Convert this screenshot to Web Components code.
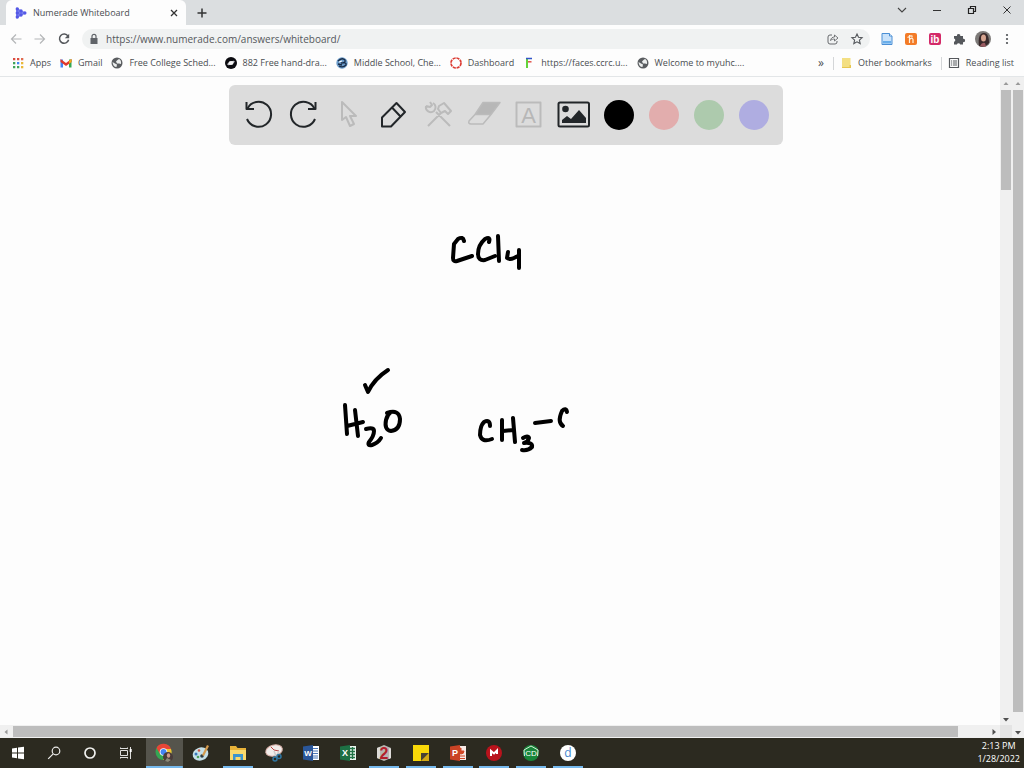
<!DOCTYPE html>
<html lang="en">
<head>
<meta charset="utf-8">
<title>Numerade Whiteboard</title>
<style>
html, body { margin: 0; height: 100%; }
body { font-family: "Open Sans", "Noto Sans", sans-serif; font-size: 9px; line-height: 12px; color: #4a4d51; background: #fdfdfd; overflow: hidden; }
</style>
</head>
<body>
<browser-window></browser-window>
<script>
const icons = {
  numerade: ['0 0 12 12', '<path d="M1 .5 11.5 6 1 11.5z" fill="#7b83ee"/><g fill="#5458e6"><circle cx="2.3" cy="2" r="1.7"/><circle cx="2.3" cy="6" r="1.7"/><circle cx="2.3" cy="10" r="1.7"/><circle cx="6" cy="4" r="1.7"/><circle cx="6" cy="8" r="1.7"/><circle cx="9.8" cy="6" r="1.7"/></g>'],
  x: ['0 0 12 12', '<path d="m3 3 6 6M9 3 3 9" stroke="#333" stroke-width="1.3"/>'],
  plus: ['0 0 12 12', '<path d="M6 1.5v9M1.5 6h9" stroke="#333" stroke-width="1.5"/>'],
  chevron: ['0 0 12 12', '<path d="m2 4 4 4 4-4" fill="none" stroke="#444" stroke-width="1.1"/>'],
  minimize: ['0 0 12 12', '<path d="M2 6.5h8" stroke="#333"/>'],
  restore: ['0 0 12 12', '<path d="M2.5 4.5h5v5h-5zM4.5 4V2.5h5v5H8" fill="none" stroke="#222" stroke-width="1.2"/>'],
  close: ['0 0 12 12', '<path d="m2.5 2.5 7 7m0-7-7 7" stroke="#333"/>'],
  back: ['0 0 12 12', '<path d="M11.5 6H1.5M6 1.5 1.5 6 6 10.5" fill="none" stroke="#b4b6b8" stroke-width="1.2"/>'],
  forward: ['0 0 12 12', '<path d="M.5 6h10M6 1.5 10.5 6 6 10.5" fill="none" stroke="#b4b6b8" stroke-width="1.2"/>'],
  reload: ['0 0 12 12', '<path d="M10 3.2A4.6 4.6 0 1 0 10.6 6.8" fill="none" stroke="#55585c" stroke-width="1.5"/><path d="M11.2.8v4.4H6.8z" fill="#55585c"/>'],
  lock: ['0 0 12 12', '<path d="M2.5 5h7v6h-7z" fill="#5f6368"/><path d="M4 5V3.3a2 2 0 0 1 4 0V5" fill="none" stroke="#5f6368" stroke-width="1.2"/>'],
  share: ['0 0 12 12', '<path d="M5 2H3a2 2 0 0 0-2 2v5a2 2 0 0 0 2 2h5a2 2 0 0 0 2-2V8" fill="none" stroke="#66696c"/><path d="M3.5 7.5C4 5 5.5 4 7.5 4V2L11 5 7.5 8V6C6 6 4.5 6.5 3.5 7.5z" fill="none" stroke="#66696c" stroke-width=".9"/>'],
  star: ['0 0 12 12', '<path d="m6 1 1.5 3.3 3.6.4-2.7 2.4.8 3.5L6 8.8l-3.2 1.8.8-3.5L.9 4.700l3.600-.4z" fill="none" stroke="#55585c" stroke-width="1.1"/>'],
  doc: ['0 0 12 12', '<path d="M1 .5h7.5L11 3v8.5H1z" fill="#c9e2fa" stroke="#4b8fd5"/><path d="M2 8h8v2.500H2z" fill="#69aeea"/><path d="M8.5.5V3H11" fill="#fff" stroke="#4b8fd5"/>'],
  honey: ['0 0 12 12', '<rect width="12" height="12" rx="2" fill="#f37b27"/><path d="M4.5 2v8M4.5 6.5Q7.5 4 8 6.5V10M7 2.5v2M2.5 4.5l4-2" fill="none" stroke="#fff3df" stroke-width="1.2"/>'],
  ib: ['0 0 12 12', '<rect width="12" height="12" rx="2" fill="#d32a68"/><text x="6" y="9.5" text-anchor="middle" font-family="Liberation Sans,sans-serif" font-size="10" font-weight="700" fill="#fff">ib</text>'],
  puzzle: ['0 0 12 12', '<path d="M1 3h3a1.700 1.700 0 1 1 3.300 0H10v2.800a1.700 1.700 0 1 1 0 3.300V11.500H7.200a1.700 1.700 0 0 0-3.300 0H1V8.800a1.700 1.700 0 0 0 0-3.300z" fill="#55585c"/>'],
  avatar: ['0 0 16 16', '<circle cx="8" cy="8" r="8" fill="#7d7a78"/><path d="M4 15C3 8 4 2 9 2c4 0 5 5 5 10a8 8 0 0 1-10 3z" fill="#392a2b"/><ellipse cx="8.5" cy="7" rx="2.5" ry="3.5" fill="#d6a490"/><path d="M5 15q2-4 5-3l1 3.400a8 8 0 0 1-6-.4z" fill="#9a5a60"/>'],
  menu: ['0 0 12 12', '<g fill="#4d5054"><circle cx="6" cy="2" r="1.1"/><circle cx="6" cy="6" r="1.1"/><circle cx="6" cy="10" r="1.1"/></g>'],
  apps: ['0 0 12 12', '<path d="M1 1h2.300v2.300H1zM5 1h2.300v2.300H5z" fill="#dc4c3f"/><path d="M9 1h2.300v2.300H9z" fill="#e06a4e"/><path d="M1 5h2.300v2.300H1z" fill="#41a35a"/><path d="M5 5h2.300v2.300H5z" fill="#4285f4"/><path d="M9 5h2.300v2.300H9z" fill="#e9b83a"/><path d="M1 9h2.300v2.300H1zM5 9h2.300v2.300H5z" fill="#41a35a"/><path d="M9 9h2.300v2.300H9z" fill="#e9b83a"/>'],
  gmail: ['0 0 12 12', '<path d="M.5 2.5H3v8H.5z" fill="#4285f4"/><path d="M9 2.5h2.5v8H9z" fill="#34a853"/><path d="M.5 2 6 6l5.500-4v3L6 9 .5 5z" fill="#e0392d"/><path d="M9 3.800 11.500 2v3L9 6.800z" fill="#f2ae18"/>'],
  globe: ['0 0 12 12', '<circle cx="6" cy="6" r="5.5" fill="#5a5d60"/><path d="M1.500 5 4 6.500l2 1-.5 2.500Q2 10 1.500 5M6.500 3 5 4.500l1 2h2l2 .5Q10.500 3 8 2z" fill="#eceeee"/>'],
  saturn: ['0 0 12 12', '<circle cx="6" cy="6" r="6" fill="#0b0b10"/><ellipse cx="6" cy="6" rx="4" ry="1.300" transform="rotate(-25 6 6)" fill="#c5c5cc"/><ellipse cx="6" cy="6" rx="2.500" ry="2" fill="#f4f4f4"/>'],
  school: ['0 0 12 12', '<circle cx="6" cy="6" r="5.700" fill="#6b9bc9"/><path d="M2 4q4-4 7-1 1 3-4 3 6-1 5 2-3 3-7 1M2 7l4 1" fill="none" stroke="#172b46" stroke-width="1.300"/><path d="M3 5l3-1" stroke="#fff"/>'],
  canvas: ['0 0 12 12', '<circle cx="6" cy="6" r="5" fill="none" stroke="#dc3c34" stroke-width="1.700" stroke-dasharray="3.100 .8"/>'],
  faces: ['0 0 12 12', '<path d="M4 1v10" stroke="#62d43a" stroke-width="2"/><path d="M3 1.500h6" stroke="#3154c8" stroke-width="1.500"/><path d="M5 4.800h3.500" stroke="#e1554c" stroke-width="1.500"/>'],
  folder: ['0 0 12 12', '<path d="M2 1h8.500v10H2z" fill="#f3df83"/><path d="M2 10h8.500v1H2zM9.500 8H11v3H9.500z" fill="#e6c650"/>'],
  list: ['0 0 12 12', '<path d="M1.500 1.500h9v9h-9z" fill="none" stroke="#55585c" stroke-width="1.200"/><path d="M3 4h1.200M5 4h4M3 6h1.200M5 6h4M3 8h1.200M5 8h4" stroke="#55585c"/>'],
  undo: ['0 0 30 30', '<path d="M2.500 2v7H10"/><path d="M3.500 8.500A12.500 12.500 0 1 1 3 19"/>', '#222629'],
  redo: ['0 0 30 30', '<path d="M26.500 2v7H19"/><path d="M25.500 8.500A12.500 12.500 0 1 0 26 19"/>', '#222629'],
  pointer: ['0 0 30 30', '<path d="M8 2v18l4-3 4 9 4-2-4-8h6z"/>', '#bbb'],
  pen: ['0 0 30 30', '<path d="M3 26.500v-9L17.500 3l8.500 9-14 14.500zM13 7.500l8.500 9"/>', '#222629'],
  tools: ['0 0 30 30', '<path d="M12 12 26 26M17 13 4 26M2 6a5 5 0 0 0 8 5 5 5 0 0 0-1-8M2 6l4 1 2-2-2-3M15 6l5-3 7 8-3 3-3-3-4 2-3-4z"/>', '#bbb'],
  eraser: ['0 0 30 30', '<path d="m14 3 17-.5-9 12H6z" fill="#b7b7b7" stroke="none"/><path d="M6 14.500h16l9-12H14zM6 14.500 0 21q-1 3 2 3h12l8-9.500" stroke-width="1.500"/>', '#bbb'],
  text: ['0 0 30 30', '<path d="M2.500 2.500h24v24h-24z"/><text x="14.500" y="23" text-anchor="middle" font-family="Liberation Sans,sans-serif" font-size="22" fill="#b7b7b7" stroke="none">A</text>', '#bbb'],
  image: ['0 0 30 30', '<rect x="-.5" y="2.500" width="30.500" height="24" rx="1.500"/><circle cx="6.500" cy="9" r="3.300" fill="#222629" stroke="none"/><path d="M3 23v-3l5-4 4 3 8-9 7 8v5z" fill="#222629" stroke="none"/>', '#222629'],
  up: ['0 0 12 12', '<path d="M3.500 8 6 5l2.500 3z" fill="#999"/>'],
  down: ['0 0 12 12', '<path d="m3 5 3 3.500L9 5z" fill="#505050"/>'],
  left: ['0 0 12 12', '<path d="M7.500 3.500 4.500 6l3 2.500z" fill="#999"/>'],
  right: ['0 0 12 12', '<path d="M4.500 3 8 6 4.500 9z" fill="#505050"/>'],
  windows: ['0 0 20 20', '<path d="m4 5.500 5-.7v4.700H4zM10 4.600l6-.9v5.800h-6zM4 10.500h5v4.700l-5-.7zM10 10.500h6v5.800l-6-.9z" fill="#fff"/>'],
  search: ['0 0 20 20', '<circle cx="12" cy="8" r="3.800" fill="none" stroke="#ececea" stroke-width="1.200"/><path d="m9.200 10.800-5 5" stroke="#ececea" stroke-width="1.200"/>'],
  cortana: ['0 0 20 20', '<circle cx="10" cy="10" r="5" fill="none" stroke="#f2f2f0" stroke-width="1.700"/>'],
  taskview: ['0 0 20 20', '<path d="M4.500 7.500h7v5h-7zM4.500 6V4.500M11.500 4.500V6M4.500 14v1.500M11.500 15.500V14M4.500 5.500h7M4.500 14.500h7M14.500 4v12" fill="none" stroke="#dededc"/><path d="M13.700 6h2v3h-2z" fill="#fff"/>'],
  chrome: ['0 0 20 20', '<circle cx="9.500" cy="9" r="8" fill="#35a653"/><path d="M2.500 5a8 8 0 0 1 14.500 1H9.500L6 11z" fill="#e94537"/><path d="M17 6a8 8 0 0 1-8 11l4-7-3-4z" fill="#f2c131"/><circle cx="9.500" cy="9" r="3.800" fill="#fff"/><circle cx="9.500" cy="9" r="3" fill="#4285f4"/><circle cx="14" cy="14" r="5" fill="#4a3c3b"/><ellipse cx="14.500" cy="12.500" rx="1.700" ry="2.200" fill="#cf9c8c"/><path d="m11 18 2-3 4 2-3 2z" fill="#887"/>'],
  paint: ['0 0 20 20', '<ellipse cx="9.500" cy="11" rx="8" ry="6.500" transform="rotate(-20 9.500 11)" fill="#c5e0e8"/><circle cx="5" cy="11" r="1.500" fill="#3978bb"/><circle cx="8" cy="7.500" r="1.300" fill="#d05746"/><circle cx="7" cy="14" r="1.300" fill="#4da05b"/><circle cx="11" cy="13" r="1.800" fill="#303d42"/><path d="m11 12 5-10 2 1-5 10z" fill="#d49b4e"/>'],
  explorer: ['0 0 20 20', '<path d="M2 3h6l1.500 2H18v12H2z" fill="#e9b339"/><path d="M2 7h16v10H2z" fill="#f9d96d"/><path d="M5 17v-6h10v6h-2.500v-3h-5v3z" fill="#3c94ce"/>'],
  snip: ['0 0 20 20', '<ellipse cx="10" cy="7.500" rx="8.500" ry="5.500" transform="rotate(-15 10 7.500)" fill="#f1ecea" stroke="#d9b0a8"/><path d="m10 7-3-3M10 7l5 1" stroke="#b44"/><path d="m10 8 2 5m3-5-3 6" stroke="#ccc" stroke-width="1.500"/><circle cx="11" cy="16" r="2" fill="none" stroke="#2f75a1" stroke-width="1.500"/><circle cx="15" cy="13.500" r="2" fill="none" stroke="#2f75a1" stroke-width="1.500"/>'],
  word: ['0 0 20 20', '<path d="M9 3h9v14H9z" fill="#fff"/><path d="M11 5.500h6M11 8h6M11 10.500h6M11 13h6M11 15h6" stroke="#4c78b8"/><path d="M2 3.500 12 2v16L2 16.500z" fill="#2a5699"/><text x="7" y="13" text-anchor="middle" font-family="Liberation Sans,sans-serif" font-size="8" font-weight="700" fill="#fff">W</text>'],
  excel: ['0 0 20 20', '<path d="M9 3h9v14H9z" fill="#eaf5ee"/><path d="M11 5.500h6M11 8.500h6M11 11.500h6M11 14.500h6M14.500 4v12" stroke="#217346" stroke-width="1.300"/><path d="M2 3.500 12 2v16L2 16.500z" fill="#1d7044"/><text x="7" y="13" text-anchor="middle" font-family="Liberation Sans,sans-serif" font-size="9" font-weight="700" fill="#fff">X</text>'],
  zotero: ['0 0 20 20', '<path d="m10 2 7 3v10l-7 3-7-3V5z" fill="#b7b5b1"/><path d="m3 5 3-1v12l-3-1zM15 5l2 1v9l-2 1z" fill="#dedbd8"/><text x="10" y="15.500" text-anchor="middle" font-family="Liberation Sans,sans-serif" font-size="16" font-weight="700" fill="#b3202b">2</text>'],
  notes: ['0 0 20 20', '<path d="M2 2h16v8l-8 8H2z" fill="#f9d808"/><path d="M10 18v-8h8z" fill="#474234"/><path d="M10 18h8v-8z" fill="#d3a916"/>'],
  powerpoint: ['0 0 20 20', '<path d="M9 3h9v14H9z" fill="#f7e9e5"/><path d="M13 5a3 3 0 1 0 3 3h-3zM12 13h5M12 15.500h5" fill="#d24726" stroke="#d24726"/><path d="M2 3.500 12 2v16L2 16.500z" fill="#ca4325"/><text x="7" y="13" text-anchor="middle" font-family="Liberation Sans,sans-serif" font-size="9" font-weight="700" fill="#fff">P</text>'],
  mendeley: ['0 0 20 20', '<circle cx="10" cy="10" r="8" fill="#b9131c"/><path d="M7 13V8l3 2.500L13 7.500V11" fill="none" stroke="#fff" stroke-width="2"/>'],
  chemdraw: ['0 0 20 20', '<circle cx="10" cy="10" r="8" fill="#18863a"/><path d="m3.500 13-.5-6 7-4 7 4-.5 6" fill="none" stroke="#dceddd"/><text x="10" y="13" text-anchor="middle" font-family="Liberation Sans,sans-serif" font-size="8" fill="#fff">CD</text>'],
  dapp: ['0 0 20 20', '<circle cx="10" cy="10" r="8" fill="#fff"/><text x="10" y="14" text-anchor="middle" font-family="Open Sans,sans-serif" font-size="12" fill="#4586cf">d</text>']
};

const define = (name, markup, setup) => {
  const template = document.createElement('template');
  template.innerHTML = markup;
  customElements.define(name, class extends HTMLElement {
    connectedCallback() {
      if (this.shadowRoot) return;
      const root = this.attachShadow({ mode: 'open' });
      root.append(template.content.cloneNode(true));
      if (setup) setup(this, root);
    }
  });
};

const makeIcon = (name) => {
  const icon = document.createElement('ui-icon');
  icon.setAttribute('name', name);
  return icon;
};

const base = `
  * { box-sizing: border-box; }
  button { margin: 0; padding: 0; border: 0; background: none; font: inherit; color: inherit; display: grid; place-items: center; }
`;

define('ui-icon', `<style>:host { display: block; flex: none; width: var(--icon, 12px); height: var(--icon, 12px); } svg { display: block; width: 100%; height: 100%; overflow: visible; }</style>`, (host, root) => {
  const [box, body, line] = icons[host.getAttribute('name')];
  const inner = line ? `<g fill="none" stroke="${line}" stroke-width="2" stroke-linejoin="round">${body}</g>` : body;
  root.innerHTML += `<svg viewBox="${box}" aria-hidden="true">${inner}</svg>`;
});

define('icon-button', `<style>${base}
  :host { display: block; width: 24px; height: 20px; }
  button { width: 100%; height: 100%; }
</style><button type="button"></button>`, (host, root) => {
  const button = root.querySelector('button');
  button.setAttribute('aria-label', host.getAttribute('label'));
  button.append(makeIcon(host.getAttribute('icon')));
});

define('tab-strip', `<style>${base}
  :host { display: flex; height: 25px; background: #dbdee0; padding-left: 6px; }
  .tab { display: flex; align-items: center; gap: 6px; width: 180px; padding: 0 6px 0 9px; background: #fdfdfd; border-radius: 6px 6px 0 0; }
  .title { flex: 1; white-space: nowrap; }
  .tab icon-button { width: 12px; }
  .new { width: 32px; height: 25px; }
  .controls { display: flex; margin-left: auto; }
  .controls icon-button { width: 35px; }
</style>
<div class="tab"><ui-icon name="numerade"></ui-icon><span class="title">Numerade Whiteboard</span><icon-button icon="x" label="Close tab"></icon-button></div>
<icon-button class="new" icon="plus" label="New tab"></icon-button>
<div class="controls">
<icon-button icon="chevron" label="Search tabs"></icon-button><icon-button icon="minimize" label="Minimize"></icon-button><icon-button icon="restore" label="Restore"></icon-button><icon-button icon="close" label="Close"></icon-button>
</div>`);

define('address-bar', `<style>${base}
  :host { display: flex; align-items: center; padding: 4px 5px 1px 4px; }
  .omnibox { flex: 1; display: flex; align-items: center; height: 20px; margin: 0 5px 0 6px; padding: 0 1px 0 6px; border-radius: 10px; background: #f0f2f2; }
  input { flex: 1; min-width: 0; border: 0; padding: 0 6px; background: none; font: inherit; font-size: 10px; line-height: 16px; color: #55585c; outline: 0; }
  .avatar { --icon: 16px; }
</style>
<icon-button icon="back" label="Back"></icon-button><icon-button icon="forward" label="Forward"></icon-button><icon-button icon="reload" label="Reload"></icon-button>
<div class="omnibox"><ui-icon name="lock"></ui-icon><input type="text" aria-label="Address" value="https://www.numerade.com/answers/whiteboard/"><icon-button icon="share" label="Share"></icon-button><icon-button icon="star" label="Bookmark this page"></icon-button></div>
<icon-button icon="doc" label="Docs"></icon-button><icon-button icon="honey" label="Honey"></icon-button><icon-button icon="ib" label="Rewards"></icon-button><icon-button icon="puzzle" label="Extensions"></icon-button><icon-button class="avatar" icon="avatar" label="Profile"></icon-button><icon-button icon="menu" label="Menu"></icon-button>`);

define('bookmark-link', `<style>
  :host { display: block; }
  a { display: flex; align-items: center; gap: 6px; color: inherit; text-decoration: none; white-space: nowrap; }
</style><a href="#"><slot></slot></a>`, (host, root) => {
  root.querySelector('a').prepend(makeIcon(host.getAttribute('icon')));
});

define('bookmarks-bar', `<style>${base}
  :host { box-sizing: border-box; display: flex; align-items: center; height: 27px; gap: 9px; padding: 0 10px 0 12px; border-bottom: 1px solid #e3e6e8; }
  .more { margin-left: auto; font-size: 12px; }
  .side { display: flex; align-items: center; gap: 6px; }
  .side::before { content: ""; width: 1px; height: 13px; background: #d4d6d8; }
</style>
<bookmark-link icon="apps">Apps</bookmark-link>
<bookmark-link icon="gmail">Gmail</bookmark-link>
<bookmark-link icon="globe">Free College Sched...</bookmark-link>
<bookmark-link icon="saturn">882 Free hand-dra...</bookmark-link>
<bookmark-link icon="school">Middle School, Che...</bookmark-link>
<bookmark-link icon="canvas">Dashboard</bookmark-link>
<bookmark-link icon="faces">https://faces.ccrc.u...</bookmark-link>
<bookmark-link icon="globe">Welcome to myuhc....</bookmark-link>
<button class="more" type="button" aria-label="More bookmarks">»</button>
<div class="side"><bookmark-link icon="folder">Other bookmarks</bookmark-link></div>
<div class="side"><bookmark-link icon="list">Reading list</bookmark-link></div>`);

define('scroll-rail', `<style>
  :host { display: flex; flex-direction: column; align-items: center; background: #f0f0f0; }
  :host([horizontal]) { flex-direction: row; }
  .track { flex: 1; display: flex; flex-direction: inherit; align-self: stretch; margin: 1px; }
  .thumb { background: #bdbdbd; flex: 0 0 var(--thumb); }
</style><div class="track"><div class="thumb"></div></div>`, (host, root) => {
  const [start, end] = host.hasAttribute('horizontal') ? ['left', 'right'] : ['up', 'down'];
  const track = root.querySelector('.track');
  track.before(makeIcon(start));
  track.after(makeIcon(end));
});

define('colour-swatch', `<style>${base}
  :host { display: grid; place-items: center; width: 45px; }
  button { width: 30px; height: 30px; border-radius: 50%; background: var(--swatch); }
</style><button type="button"></button>`, (host, root) => root.querySelector('button').setAttribute('aria-label', host.getAttribute('label')));

define('board-toolbar', `<style>
  :host { display: flex; height: 60px; padding: 0 7px; border-radius: 6px; background: #dcdcdc; --icon: 30px; }
  icon-button { width: 45px; height: 60px; }
</style>
<icon-button icon="undo" label="Undo"></icon-button><icon-button icon="redo" label="Redo"></icon-button><icon-button icon="pointer" label="Select"></icon-button><icon-button icon="pen" label="Pen"></icon-button><icon-button icon="tools" label="Tools"></icon-button><icon-button icon="eraser" label="Eraser"></icon-button><icon-button icon="text" label="Text"></icon-button><icon-button icon="image" label="Image"></icon-button>
<colour-swatch label="Black" style="--swatch:#000"></colour-swatch><colour-swatch label="Red" style="--swatch:#e2adad"></colour-swatch><colour-swatch label="Green" style="--swatch:#adcaad"></colour-swatch><colour-swatch label="Blue" style="--swatch:#afade1"></colour-swatch>`);

/* Pen strokes, in board coordinates. */
define('ink-layer', `<style>:host { display: block; } svg { display: block; overflow: visible; }</style>
<svg width="1000" height="640" viewBox="0 77 1000 640" role="img" aria-label="Handwritten CCl4, H2O with a tick, CH3–C" fill="none" stroke="#000" stroke-width="4" stroke-linecap="round" stroke-linejoin="round">
<path d="M464 241Q463 236 458 239L454 244 453 258Q453 262 457 261L472 256"/>
<path d="M489 242Q491 236 485 239Q478 245 478 254Q478 261 485 260L495 256"/>
<path d="M498 236 499 261"/><path d="M508 252 507 258Q511 261 519 255M519 250 519 268"/>
<path d="M365 385 368 392Q374 379 388 370"/>
<path d="M345 405 347 434M355 410 358 436M347 426 363 422"/>
<path d="M366 429Q374 427 374 431Q374 436 369 442Q367 446 372 445Q378 443 381 438"/>
<path d="M387 413Q399 409 400 419Q400 430 391 431Q384 430 386 420Q387 415 391 412"/>
<path d="M490 426Q490 419 484 422Q480 426 480 435Q482 443 492 439"/>
<path d="M502 420 502 440M513 418 515 442M503 431 514 430"/>
<path d="M523 438Q528 435 529 438Q528 442 524 443Q533 442 532 447Q528 451 522 450"/>
<path d="M535 423 551 421"/><path d="M567 412Q566 407 562 411Q557 422 563 426"/>
</svg>`);

define('board-view', `<style>
  :host { display: grid; grid-template-columns: minmax(0, 1fr) 12px 12px; grid-template-rows: minmax(0, 1fr) 13px; min-height: 0; }
  main { overflow: hidden; position: relative; }
  ink-layer { position: absolute; inset: 0; }
  .bar { position: relative; display: flex; justify-content: center; padding: 8px 0 0 12px; }
  .outer { grid-column: 3; grid-row: 1 / 3; --thumb: 98%; }
  .inner { --thumb: 16%; }
  .across { --thumb: 97%; }
  .corner { background: #e4e4e4; }
</style>
<main><ink-layer></ink-layer><div class="bar"><board-toolbar></board-toolbar></div></main>
<scroll-rail class="inner"></scroll-rail>
<scroll-rail class="outer"></scroll-rail>
<scroll-rail class="across" horizontal></scroll-rail>
<div class="corner"></div>`);

define('task-bar', `<style>
  :host { display: flex; height: 30px; background: #2c2a20; color: #fff; --icon: 20px; }
  icon-button { width: 36px; height: 30px; }
  .apps { display: grid; grid-template-columns: repeat(12, 1fr); width: 440px; margin-left: 2px; }
  .apps icon-button { width: 100%; height: 30px; }
  .open { background: linear-gradient(#76b9ed, #76b9ed) center bottom / 30px 2px no-repeat; }
  .active { background: linear-gradient(#76b9ed, #76b9ed) center bottom / 100% 2px no-repeat #55544c; }
  .clock { margin-left: auto; padding: 1px 4px 0 0; line-height: 13px; display: flex; flex-direction: column; align-items: center; }
</style>
<icon-button icon="windows" label="Start"></icon-button><icon-button icon="search" label="Search"></icon-button><icon-button icon="cortana" label="Cortana"></icon-button><icon-button icon="taskview" label="Task view"></icon-button>
<div class="apps">
<icon-button class="active" icon="chrome" label="Chrome"></icon-button><icon-button icon="paint" label="Paint"></icon-button><icon-button class="open" icon="explorer" label="File Explorer"></icon-button><icon-button icon="snip" label="Snipping Tool"></icon-button><icon-button icon="word" label="Word"></icon-button><icon-button icon="excel" label="Excel"></icon-button><icon-button class="open" icon="zotero" label="Reader"></icon-button><icon-button class="open" icon="notes" label="Sticky Notes"></icon-button><icon-button class="open" icon="powerpoint" label="PowerPoint"></icon-button><icon-button class="open" icon="mendeley" label="Mendeley"></icon-button><icon-button class="open" icon="chemdraw" label="ChemDraw"></icon-button><icon-button class="open" icon="dapp" label="Drawing"></icon-button>
</div>
<div class="clock"><span>2:13 PM</span><span>1/28/2022</span></div>`);

define('browser-window', `<style>
  :host { display: flex; flex-direction: column; height: 100vh; }
  board-view { flex: 1; }
</style><tab-strip></tab-strip><address-bar></address-bar><bookmarks-bar></bookmarks-bar><board-view></board-view><task-bar></task-bar>`);
</script>
</body>
</html>
